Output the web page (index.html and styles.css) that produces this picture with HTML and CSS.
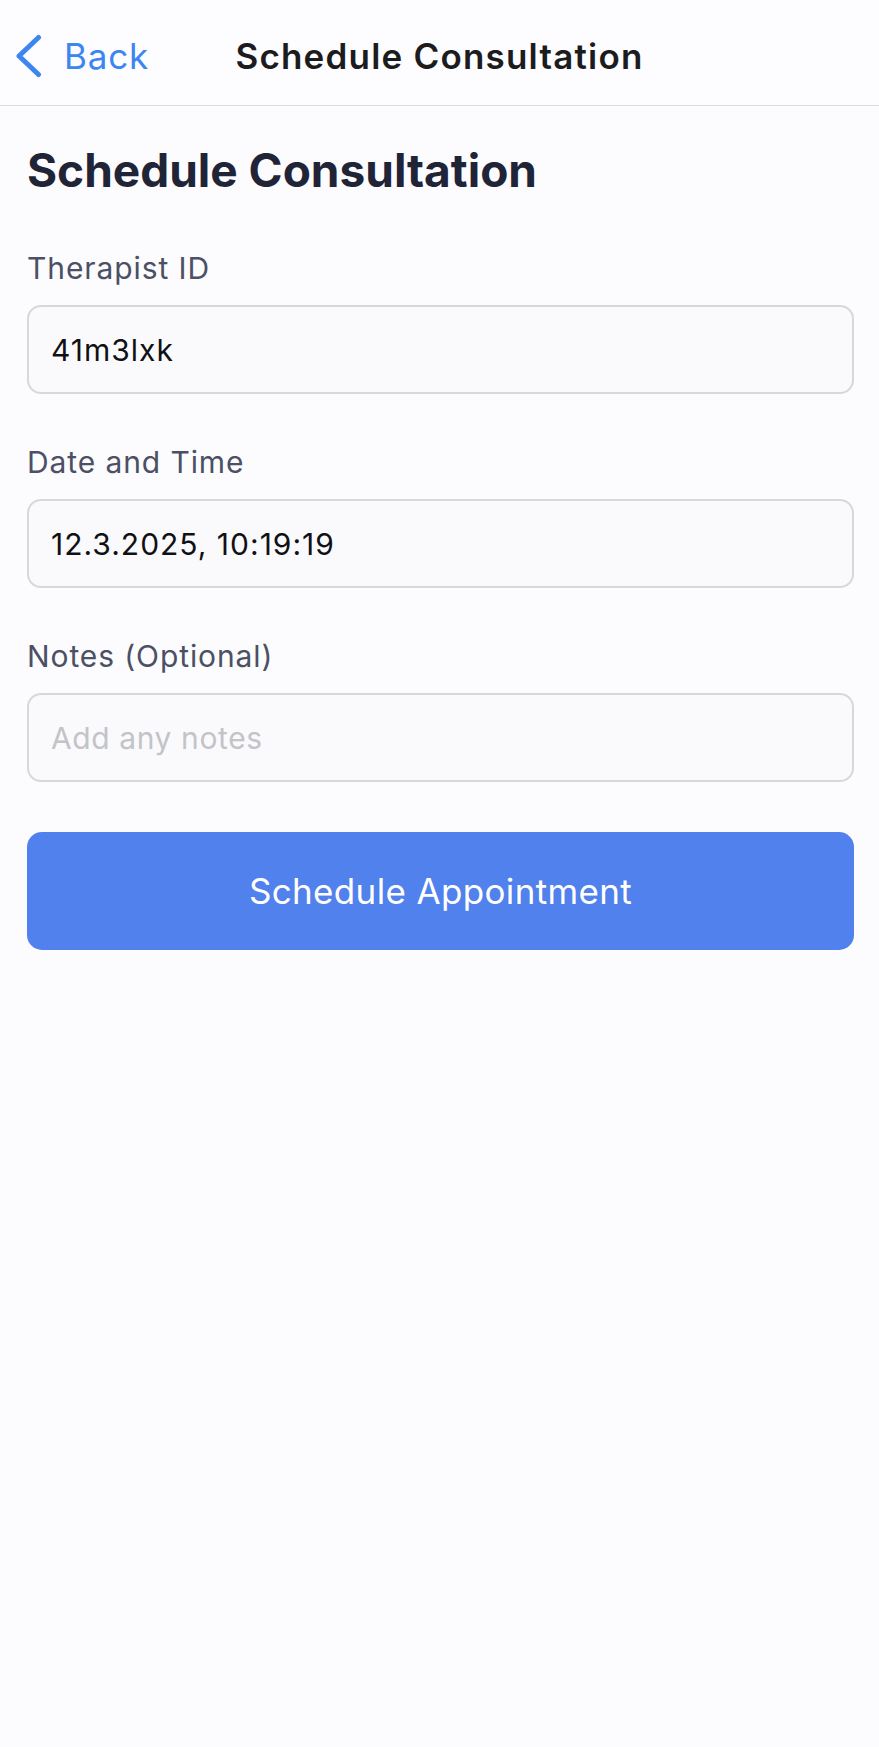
FILE: index.html
```html
<!DOCTYPE html>
<html lang="en">
<head>
<meta charset="utf-8">
<title>Schedule Consultation</title>
<link rel="stylesheet" href="styles.css">
</head>
<body>
<header class="nav">
  <a class="nav-back" href="#">
    <svg class="nav-chevron" width="28" height="44" viewBox="0 0 28 44" aria-hidden="true">
      <path d="M24.5 3.5 L5 22 L24.5 40.5" fill="none" stroke="currentColor" stroke-width="5" stroke-linecap="round" stroke-linejoin="round"/>
    </svg>
    <span>Back</span>
  </a>
  <h1 class="nav-title">Schedule Consultation</h1>
  <div class="nav-spacer"></div>
</header>
<main class="content">
  <h2 class="page-title">Schedule Consultation</h2>
  <form class="form">
    <div class="field">
      <label class="field-label">Therapist ID</label>
      <div class="field-input">41m3lxk</div>
    </div>
    <div class="field">
      <label class="field-label">Date and Time</label>
      <div class="field-input">12.3.2025, 10:19:19</div>
    </div>
    <div class="field">
      <label class="field-label">Notes (Optional)</label>
      <div class="field-input placeholder">Add any notes</div>
    </div>
    <button class="submit" type="button">Schedule Appointment</button>
  </form>
</main>
</body>
</html>
```
FILE: styles.css
```css
* { box-sizing: border-box; }

html, body {
  margin: 0;
  padding: 0;
}

body {
  background: #fcfbfe;
  font-family: Inter, "Liberation Sans", sans-serif;
  min-height: 1747px;
}

.nav {
  height: 106px;
  padding: 6px 14px 0 14px;
  display: grid;
  grid-template-columns: 1fr auto 1fr;
  align-items: center;
  background: #fdfcff;
  border-bottom: 1px solid #dcdcdf;
}

.nav-back {
  display: flex;
  align-items: center;
  gap: 22px;
  color: #3b86f0;
  text-decoration: none;
  font-size: 35px;
  line-height: 42px;
  font-weight: 400;
  letter-spacing: 0.8px;
  justify-self: start;
}

.nav-chevron {
  display: block;
  flex: none;
}

.nav-title {
  margin: 0;
  font-size: 35px;
  line-height: 42px;
  font-weight: 600;
  color: #1c1c1e;
  letter-spacing: 1.2px;
}

.content {
  padding: 36px 25px 0 27px;
}

.page-title {
  margin: 0 0 52px;
  font-size: 46px;
  line-height: 56px;
  font-weight: 700;
  color: #1f2436;
  letter-spacing: 0;
}

.form {
  display: flex;
  flex-direction: column;
  gap: 50px;
}

.field {
  display: flex;
  flex-direction: column;
  gap: 19px;
}

.field-label {
  font-size: 30px;
  line-height: 36px;
  color: #4b5064;
  letter-spacing: 0.9px;
}

.field-input {
  height: 89px;
  padding: 0 22px;
  display: flex;
  align-items: center;
  border: 2px solid #d8d8dc;
  border-radius: 14px;
  background: #fafafd;
  font-size: 30px;
  color: #111114;
  letter-spacing: 1px;
}

.field-input.placeholder {
  color: #c3c3c8;
  letter-spacing: 0.6px;
}

.submit {
  height: 118px;
  width: 100%;
  border: none;
  border-radius: 15px;
  background: #5181ec;
  color: #ffffff;
  font-family: inherit;
  font-size: 35px;
  font-weight: 400;
  letter-spacing: 0.35px;
}
```
